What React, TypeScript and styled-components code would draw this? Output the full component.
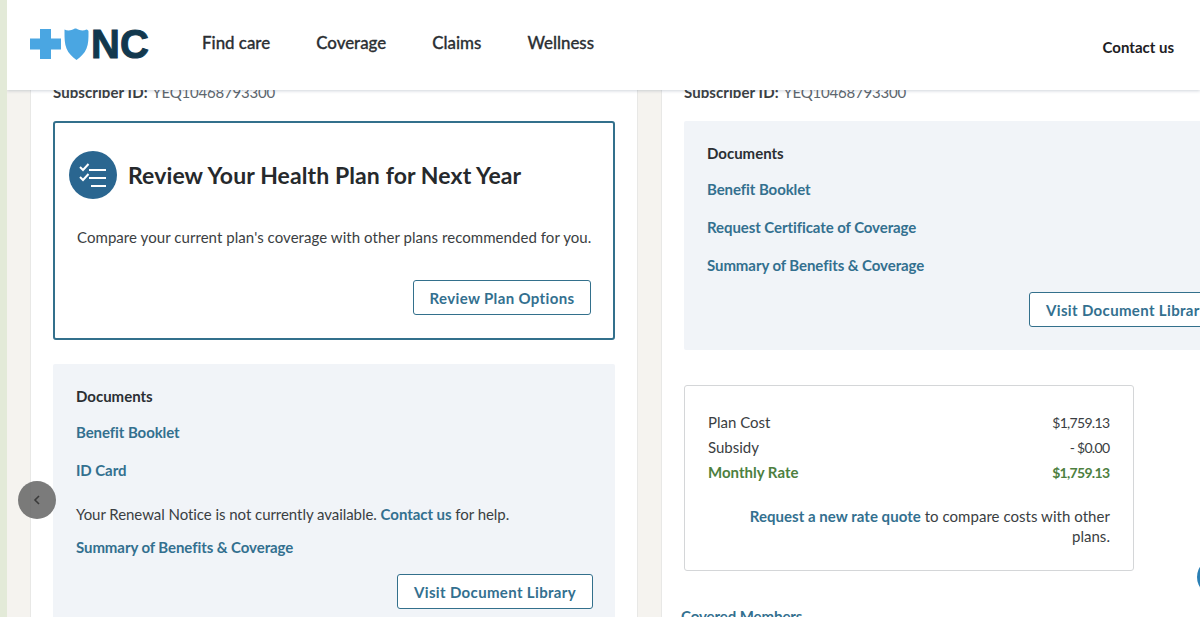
import React from "react";
import styled, { createGlobalStyle } from "styled-components";

const Global = createGlobalStyle`
  html, body { margin: 0; padding: 0; height: 100%; overflow: hidden; background: #fff; }
  body { font-family: Lato, "Open Sans", "Liberation Sans", sans-serif; color: #33373b; }
  * { box-sizing: border-box; }
`;

const Page = styled.div`
  position: relative;
  display: flex;
  width: 1200px;
  height: 617px;
  overflow: hidden;
  background: #e3ead8;
`;
const Main = styled.div`
  position: relative;
  flex: 1;
  min-width: 0;
  overflow: hidden;
  margin-left: 7px;
  background: #f5f3ef;
`;
const Header = styled.header`
  position: absolute;
  top: 0;
  left: 0;
  right: 0;
  z-index: 3;
  height: 90px;
  display: flex;
  align-items: center;
  padding: 0 26px 0 23px;
  background: #fff;
  box-shadow: 0 1px 3px rgba(70, 90, 120, 0.25);
`;
const Logo = styled.div`
  display: flex;
  align-items: center;
  width: 172px;
  margin-top: -2px;
`;
const LogoText = styled.span`
  font-family: "Liberation Sans", sans-serif;
  font-weight: 700;
  font-size: 40px;
  line-height: 40px;
  color: #12384e;
  -webkit-text-stroke: 1px #12384e;
  margin-left: 2px;
`;
const Nav = styled.nav`
  display: flex;
  gap: 46px;
  flex: 1;
  margin-top: -5px;
`;
const NavLink = styled.a`
  font-size: 16.900px;
  font-weight: 500;
  color: #2b2f33;
  -webkit-text-stroke: 0.3px #2b2f33;
`;
const Contact = styled.a`
  font-size: 15px;
  font-weight: 700;
  color: #1d2023;
  margin-top: 3px;
`;
const Columns = styled.div`
  display: flex;
  gap: 23px;
  padding: 0 0 0 23px;
  width: 1300px;
`;
const Card = styled.section`
  width: 608px;
  height: 700px;
  flex: none;
  padding: 83px 22px 0 23px;
  background: #fff;
  border-left: 1px solid #e8e8e6;
  border-right: 1px solid #e8e8e6;
`;
const Subscriber = styled.div`
  font-size: 15px;
  line-height: 18px;
  color: #3a3e42;
  font-weight: 700;
  margin-bottom: 20px;
  margin-left: -1px;
  letter-spacing: 0.08px;
  span { margin-left: 1px; font-weight: 400; color: #5d666d; letter-spacing: -0.2px; }
`;
const Review = styled.div`
  height: 219px;
  border: 2px solid #33708c;
  border-radius: 3px;
  padding: 28px 22px 0 14px;
  margin-left: -1px;
  margin-bottom: 24px;
`;
const ReviewHead = styled.div`
  display: flex;
  align-items: center;
  gap: 11px;
`;
const Circle = styled.div`
  width: 48px;
  height: 48px;
  border-radius: 50%;
  background: #2a6690;
`;
const Title = styled.h2`
  margin: 0;
  font-size: 23px;
  font-weight: 700;
  color: #26292c;
  letter-spacing: 0.1px;
`;
const Desc = styled.p`
  margin: 28px 0 0 8px;
  font-size: 15px;
  line-height: 20px;
  color: #3a3e42;
  letter-spacing: 0.06px;
  white-space: nowrap;
`;
const Right = styled.div<{ $top: number; $shift?: number }>`
  display: flex;
  justify-content: flex-end;
  margin-top: ${(p) => p.$top}px;
  margin-right: ${(p) => p.$shift ?? 0}px;
`;
const Outline = styled.button<{ $w: number }>`
  width: ${(p) => p.$w}px;
  height: 35px;
  background: #fff;
  border: 1px solid #33708c;
  border-radius: 3px;
  font-family: inherit;
  font-size: 15px;
  font-weight: 700;
  color: #33708f;
  letter-spacing: 0.35px;
  white-space: nowrap;
  padding: 0;
`;
const Panel = styled.div<{ $h: number; $mb?: number }>`
  height: ${(p) => p.$h}px;
  margin-left: -1px;
  margin-bottom: ${(p) => p.$mb ?? 0}px;
  background: #f1f4f8;
  padding: 22px 23px 0;
  border-radius: 2px;
`;
const PanelHead = styled.div`
  font-size: 15px;
  line-height: 20px;
  font-weight: 700;
  color: #2b2f33;
`;
const DocLink = styled.a<{ $top?: number }>`
  display: block;
  margin-top: ${(p) => p.$top ?? 18}px;
  font-size: 15px;
  line-height: 20px;
  font-weight: 700;
  color: #33708f;
  letter-spacing: -0.08px;
`;
const Note = styled.p`
  margin: 24px 0 0;
  font-size: 15px;
  line-height: 20px;
  color: #3a3e42;
  white-space: nowrap;
  letter-spacing: -0.05px;
  a { font-weight: 700; color: #33708f; }
`;
const Rate = styled.div`
  width: 450px;
  height: 186px;
  margin-left: -1px;
  border: 1px solid #d4d6d8;
  border-radius: 3px;
  padding: 24px 23px 0;
`;
const RateRow = styled.div<{ $green?: boolean }>`
  display: flex;
  justify-content: space-between;
  font-size: 15px;
  line-height: 25px;
  color: ${(p) => (p.$green ? "#4d7f3f" : "#3a3e42")};
  font-weight: ${(p) => (p.$green ? 700 : 400)};
`;
const Amount = styled.span`
  font-size: 14px;
  letter-spacing: -0.700px;
  margin-right: 0.700px;
`;
const RateNote = styled.p`
  margin: 21px 0 0 40px;
  font-size: 15px;
  line-height: 20px;
  letter-spacing: 0.04px;
  text-align: right;
  color: #3a3e42;
  a { font-weight: 700; color: #33708f; }
`;
const Covered = styled(DocLink)`
  margin-top: 35px;
  margin-left: -4px;
`;
const Back = styled.button`
  position: absolute;
  left: 18px;
  top: 481px;
  z-index: 4;
  width: 38px;
  height: 38px;
  border: 0;
  padding: 0;
  border-radius: 50%;
  background: rgba(100, 100, 100, 0.85);
  display: flex;
  align-items: center;
  justify-content: center;
`;
const Fab = styled.div`
  position: absolute;
  left: 1197px;
  top: 558px;
  z-index: 4;
  width: 38px;
  height: 38px;
  border-radius: 50%;
  background: #2a7fb4;
`;

export default function App() {
  return (
    <Page>
      <Global />
      <Main>
        <Header>
          <Logo>
            <svg width="59" height="32" viewBox="0 0 59 32">
              <path d="M10 1h11v9.500h10v11H21V31H10v-9.500H0v-11h10z" fill="#4aa6e2" />
              <path d="M34.500 1.500c3 1.500 7 1 9.500-.5 1-.6 2-.6 3 0 2.500 1.500 6.500 2 9.500.5 1 0 2 1 2 2 0 7 0 12-2 17-2 5-5.500 8-10 11.500-4.500-3.500-8-6.500-10-11.500-2-5-2-10-2-17 0-1 0-2 0-2z" fill="#4aa6e2" />
            </svg>
            <LogoText>NC</LogoText>
          </Logo>
          <Nav>
            <NavLink>Find care</NavLink>
            <NavLink>Coverage</NavLink>
            <NavLink>Claims</NavLink>
            <NavLink>Wellness</NavLink>
          </Nav>
          <Contact>Contact us</Contact>
        </Header>
        <Columns>
          <Card>
            <Subscriber>Subscriber ID: <span>YEQ10468793300</span></Subscriber>
            <Review>
              <ReviewHead>
                <Circle>
                  <svg width="48" height="48" viewBox="0 0 48 48" fill="none" stroke="#fff" strokeWidth="2">
                    <path d="M11 16l3 3 5.500-6M11 26l3 3 5.500-6" />
                    <path d="M20 19h17M20 27h17M22 35h15" />
                  </svg>
                </Circle>
                <Title>Review Your Health Plan for Next Year</Title>
              </ReviewHead>
              <Desc>Compare your current plan's coverage with other plans recommended for you.</Desc>
              <Right $top={33}><Outline $w={178}>Review Plan Options</Outline></Right>
            </Review>
            <Panel $h={300}>
              <PanelHead>Documents</PanelHead>
              <DocLink $top={16}>Benefit Booklet</DocLink>
              <DocLink>ID Card</DocLink>
              <Note>Your Renewal Notice is not currently available. <a>Contact us</a> for help.</Note>
              <DocLink $top={13}>Summary of Benefits &amp; Coverage</DocLink>
              <Right $top={17} $shift={-1}><Outline $w={196}>Visit Document Library</Outline></Right>
            </Panel>
          </Card>
          <Card>
            <Subscriber>Subscriber ID: <span>YEQ10468793300</span></Subscriber>
            <Panel $h={229} $mb={35}>
              <PanelHead>Documents</PanelHead>
              <DocLink $top={16}>Benefit Booklet</DocLink>
              <DocLink>Request Certificate of Coverage</DocLink>
              <DocLink>Summary of Benefits &amp; Coverage</DocLink>
              <Right $top={17} $shift={-2}><Outline $w={196}>Visit Document Library</Outline></Right>
            </Panel>
            <Rate>
              <RateRow><span>Plan Cost</span><Amount>$1,759.13</Amount></RateRow>
              <RateRow><span>Subsidy</span><Amount>- $0.00</Amount></RateRow>
              <RateRow $green><span>Monthly Rate</span><Amount>$1,759.13</Amount></RateRow>
              <RateNote><a>Request a new rate quote</a> to compare costs with other plans.</RateNote>
            </Rate>
            <Covered>Covered Members</Covered>
          </Card>
        </Columns>
      </Main>
      <Back aria-label="Back">
        <svg width="12" height="12" viewBox="0 0 12 12" fill="none" stroke="#3a3a3a" strokeWidth="1.600"><path d="M8 2L4 6l4 4" /></svg>
      </Back>
      <Fab />
    </Page>
  );
}
